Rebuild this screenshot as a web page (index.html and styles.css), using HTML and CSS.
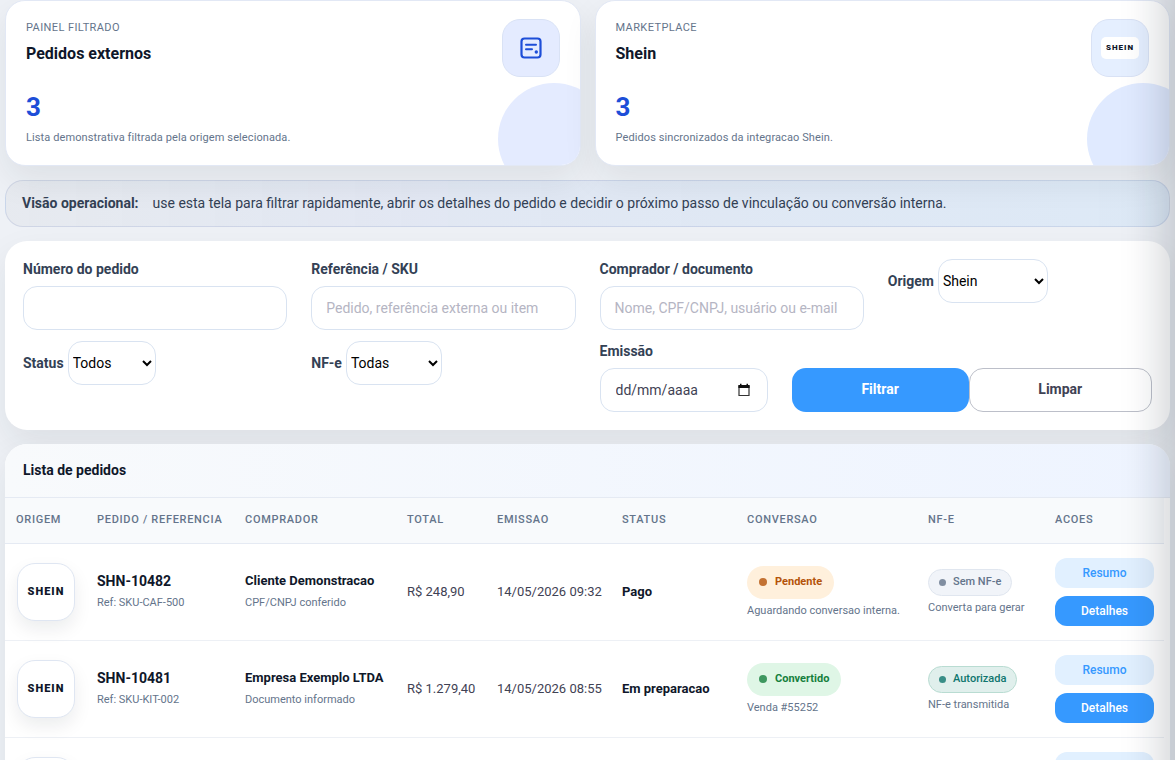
FILE: index.html
```html
<!DOCTYPE html>
<html lang="pt-BR">
<head>
    <meta charset="UTF-8">
    <meta name="viewport" content="width=device-width, initial-scale=1.0">
    <title>Pedidos externos</title>
    <link rel="stylesheet" href="styles.css">
</head>
<body>
    <main class="page">
        <section class="summary">
            <article class="summary-card">
                <div class="summary-top">
                    <div>
                        <p class="summary-kicker">Painel filtrado</p>
                        <h2 class="summary-title">Pedidos externos</h2>
                    </div>
                    <div class="summary-icon">
                        <svg width="24" height="24" viewBox="0 0 24 24" fill="none" stroke="#1d4ed8" stroke-linecap="round" stroke-linejoin="round">
                            <rect x="2.500" y="2.500" width="19" height="19" rx="3" stroke-width="2.2"/>
                            <path d="M7 8.700h10M7 13.300h6" stroke-width="2"/>
                            <circle cx="17.300" cy="16" r="1.700" fill="#1d4ed8" stroke="none"/>
                        </svg>
                    </div>
                </div>
                <p class="summary-value">3</p>
                <p class="summary-note">Lista demonstrativa filtrada pela origem selecionada.</p>
            </article>
            <article class="summary-card market">
                <div class="summary-top">
                    <div>
                        <p class="summary-kicker">Marketplace</p>
                        <h2 class="summary-title">Shein</h2>
                    </div>
                    <div class="summary-icon"><span class="brand-chip">SHEIN</span></div>
                </div>
                <p class="summary-value">3</p>
                <p class="summary-note">Pedidos sincronizados da integracao Shein.</p>
            </article>
        </section>

        <section class="hint">
            <strong>Visão operacional:</strong>
            <span>use esta tela para filtrar rapidamente, abrir os detalhes do pedido e decidir o próximo passo de vinculação ou conversão interna.</span>
        </section>

        <form class="filters">
            <div class="field">
                <label for="numero">Número do pedido</label>
                <input type="text" id="numero">
            </div>
            <div class="field">
                <label for="referencia">Referência / SKU</label>
                <input type="text" id="referencia" placeholder="Pedido, referência externa ou item">
            </div>
            <div class="field">
                <label for="comprador">Comprador / documento</label>
                <input type="text" id="comprador" placeholder="Nome, CPF/CNPJ, usuário ou e-mail">
            </div>
            <div class="field-inline">
                <label for="origem">Origem</label>
                <select id="origem" class="select-lg">
                    <option>Shein</option>
                </select>
            </div>
            <div class="field-inline">
                <label for="status">Status</label>
                <select id="status" class="select-sm">
                    <option>Todos</option>
                </select>
            </div>
            <div class="field-inline">
                <label for="nfe">NF-e</label>
                <select id="nfe" class="select-md">
                    <option>Todas</option>
                </select>
            </div>
            <div class="field field-date">
                <label for="emissao">Emissão</label>
                <div class="date-box">
                    <input type="text" id="emissao" placeholder="dd/mm/aaaa">
                    <button type="button" class="date-btn" aria-label="Abrir calendário">
                        <svg width="14" height="14" viewBox="0 0 14 14">
                            <path d="M2 3h10v9.500H2z" fill="none" stroke="#333" stroke-width="1.200"/>
                            <path d="M1.400 2h11.200v3H1.400zM3 .8h1.500V2H3zM9.500 .8H11V2H9.500z" fill="#111"/>
                        </svg>
                    </button>
                </div>
            </div>
            <div class="filter-actions">
                <button type="submit" class="btn btn-primary">Filtrar</button>
                <button type="reset" class="btn btn-outline">Limpar</button>
            </div>
        </form>

        <section class="orders">
            <h3 class="orders-header">Lista de pedidos</h3>
            <table class="orders-table">
                <colgroup>
                    <col class="c-origem">
                    <col class="c-pedido">
                    <col class="c-comprador">
                    <col class="c-total">
                    <col class="c-data">
                    <col class="c-data">
                    <col class="c-conversao">
                    <col class="c-nfe">
                    <col class="c-acoes">
                </colgroup>
                <thead>
                    <tr>
                        <th>Origem</th>
                        <th>Pedido / Referencia</th>
                        <th>Comprador</th>
                        <th>Total</th>
                        <th>Emissao</th>
                        <th>Status</th>
                        <th>Conversao</th>
                        <th>NF-e</th>
                        <th>Acoes</th>
                    </tr>
                </thead>
                <tbody>
                    <tr>
                        <td><div class="brand-logo">SHEIN</div></td>
                        <td><strong class="order-id">SHN-10482</strong><span class="muted">Ref: SKU-CAF-500</span></td>
                        <td><strong class="buyer">Cliente Demonstracao</strong><span class="muted">CPF/CNPJ conferido</span></td>
                        <td>R$ 248,90</td>
                        <td>14/05/2026 09:32</td>
                        <td><strong>Pago</strong></td>
                        <td><span class="badge pending">Pendente</span><span class="note">Aguardando conversao interna.</span></td>
                        <td><span class="tag tag-gray">Sem NF-e</span><span class="note">Converta para gerar</span></td>
                        <td>
                            <div class="row-actions">
                                <button type="button" class="btn-row light">Resumo</button>
                                <button type="button" class="btn-row solid">Detalhes</button>
                            </div>
                        </td>
                    </tr>
                    <tr>
                        <td><div class="brand-logo">SHEIN</div></td>
                        <td><strong class="order-id">SHN-10481</strong><span class="muted">Ref: SKU-KIT-002</span></td>
                        <td><strong class="buyer">Empresa Exemplo LTDA</strong><span class="muted">Documento informado</span></td>
                        <td>R$ 1.279,40</td>
                        <td>14/05/2026 08:55</td>
                        <td><strong>Em preparacao</strong></td>
                        <td><span class="badge converted">Convertido</span><span class="note">Venda #55252</span></td>
                        <td><span class="tag tag-green">Autorizada</span><span class="note">NF-e transmitida</span></td>
                        <td>
                            <div class="row-actions">
                                <button type="button" class="btn-row light">Resumo</button>
                                <button type="button" class="btn-row solid">Detalhes</button>
                            </div>
                        </td>
                    </tr>
                    <tr>
                        <td><div class="brand-logo"></div></td>
                        <td></td>
                        <td></td>
                        <td></td>
                        <td></td>
                        <td></td>
                        <td><span class="badge pending">Pendente</span><span class="note">Aguardando conversao interna.</span></td>
                        <td></td>
                        <td>
                            <div class="row-actions">
                                <button type="button" class="btn-row light">Resumo</button>
                                <button type="button" class="btn-row solid">Detalhes</button>
                            </div>
                        </td>
                    </tr>
                </tbody>
            </table>
        </section>
    </main>
    <aside class="drawer" aria-hidden="true"></aside>
</body>
</html>
```
FILE: styles.css
```css
* {
    margin: 0;
    padding: 0;
    box-sizing: border-box;
}

html {
    height: 100%;
    overflow: hidden;
}

body {
    height: 100%;
    overflow: hidden;
    background: #eef1f6;
    color: #3f4254;
    font-family: Roboto, sans-serif;
    font-size: 14px;
    line-height: 21px;
}

input,
select,
button {
    font-family: inherit;
    font-size: 14px;
}

.page {
    padding: 0 5px;
}

/* summary cards */
.summary {
    display: grid;
    grid-template-columns: 1fr 1fr;
    gap: 14px;
    margin-bottom: 14px;
}

.summary-card {
    position: relative;
    overflow: hidden;
    height: 166px;
    padding: 18px 20px;
    background: #fff;
    border: 1px solid #e2e8f5;
    border-radius: 20px;
    box-shadow: 0 14px 34px rgba(20, 40, 40, 0.08);
}

.summary-card::after {
    content: "";
    position: absolute;
    right: -30px;
    bottom: -30px;
    width: 112px;
    height: 112px;
    border-radius: 50%;
    background: #e4ebff;
}

.summary-card.market::after {
    background: #e0eaff;
}

.summary-top {
    display: flex;
    justify-content: space-between;
    height: 73px;
}

.summary-kicker {
    color: #64748b;
    font-size: 11px;
    line-height: 18px;
    letter-spacing: 0.4px;
    text-transform: uppercase;
}

.summary-title {
    margin-top: 7px;
    color: #0f172a;
    font-size: 16px;
    font-weight: 700;
    line-height: 20px;
}

.summary-icon {
    display: flex;
    align-items: center;
    justify-content: center;
    width: 58px;
    height: 58px;
    background: #e4ebff;
    border: 1px solid #d9e2f5;
    border-radius: 18px;
}

.market .summary-icon {
    background: #e5efff;
}

.brand-chip {
    width: 38px;
    background: #fff;
    border-radius: 5px;
    color: #0f172a;
    font-size: 8px;
    font-weight: 900;
    letter-spacing: 1px;
    line-height: 22px;
    text-align: center;
}

.summary-value {
    color: #1d4ed8;
    font-size: 26px;
    font-weight: 700;
    line-height: 31px;
}

.summary-note {
    margin-top: 6px;
    color: #64748b;
    font-size: 11px;
    line-height: 18px;
    letter-spacing: 0.1px;
}

.hint {
    display: flex;
    gap: 14px;
    margin-bottom: 14px;
    padding: 12px 16px;
    background: linear-gradient(90deg, rgba(15, 23, 42, 0.03), rgba(59, 110, 216, 0.07) 40%, rgba(54, 153, 255, 0.09));
    border: 1px solid rgba(148, 163, 200, 0.28);
    border-radius: 18px;
    color: #334155;
}

/* filters */
.filters {
    display: grid;
    grid-template-columns: repeat(12, 1fr);
    gap: 11px 24px;
    margin-bottom: 14px;
    padding: 18px;
    background: #fff;
    border-radius: 22px;
    box-shadow: 0 14px 34px rgba(20, 40, 40, 0.08);
}

.filters label {
    color: #334155;
    font-weight: 700;
}

.field,
.field-inline {
    grid-column: span 3;
    min-width: 0;
}

.field label {
    display: block;
    margin-bottom: 6px;
}

.field-inline {
    display: flex;
    align-items: center;
    align-self: start;
    gap: 4px;
}

.field > input,
.field-inline select,
.date-box {
    width: 100%;
    height: 44px;
    background: #fff;
    border: 1px solid #d9e3f1;
    border-radius: 14px;
    outline: none;
}

.field > input {
    padding: 0 14px;
}

.filters input::placeholder {
    color: #b5b5c3;
}

.field-inline select {
    color: #000;
}

.field-inline .select-sm {
    width: 88px;
}

.field-inline .select-md {
    width: 96px;
}

.field-inline .select-lg {
    width: 110px;
}

.field-date {
    grid-column: span 2;
}

.date-box {
    display: flex;
    align-items: center;
    padding: 0 16px 0 15px;
}

.date-box input {
    flex: 1;
    min-width: 0;
    border: 0;
    outline: none;
}

.filters .date-box input::placeholder {
    color: #3f4254;
}

.date-btn {
    display: flex;
    background: none;
    border: 0;
    cursor: pointer;
}

.filter-actions {
    grid-column: span 4;
    display: flex;
    align-items: flex-end;
}

.btn {
    flex: 1 1 auto;
    height: 44px;
    padding-bottom: 2px;
    border: 1px solid transparent;
    border-radius: 14px;
    font-weight: 700;
    cursor: pointer;
}

.btn-primary {
    background: #3699ff;
    color: #fff;
}

.btn-outline {
    background: #fff;
    border-color: #bcbfc9;
    color: #3f4254;
}

/* orders list */
.orders {
    overflow: hidden;
    background: #fff;
    border-radius: 22px;
    box-shadow: 0 14px 34px rgba(20, 40, 40, 0.08);
}

.orders-header {
    padding: 16px 18px;
    background: linear-gradient(90deg, #f8fafc, #eef4ff);
    border-bottom: 1px solid #e5eaf3;
    color: #0f172a;
    font-size: 14px;
    font-weight: 700;
}

.orders-table {
    width: calc(100% - 6px);
    border-collapse: separate;
    border-spacing: 0;
    table-layout: fixed;
}

.c-origem {
    width: 81px;
}

.c-pedido {
    width: 148px;
}

.c-comprador {
    width: 162px;
}

.c-total {
    width: 90px;
}

.c-data {
    width: 125px;
}

.c-conversao {
    width: 181px;
}

.c-nfe {
    width: 127px;
}

.c-acoes {
    width: 120px;
}

.orders-table th {
    padding: 11px 11px 13px;
    background: #f8fafc;
    border-bottom: 1px solid #e5eaf3;
    color: #64748b;
    font-size: 11px;
    font-weight: 500;
    letter-spacing: 0.7px;
    text-align: left;
    text-transform: uppercase;
    white-space: nowrap;
}

.orders-table td {
    padding: 14px 10px 14px 11px;
    border-bottom: 1px solid #edf0f5;
    font-size: 13px;
    line-height: 20px;
    white-space: nowrap;
}

.orders-table td strong {
    color: #0f172a;
    font-weight: 700;
}

.orders-table td .order-id {
    display: block;
    font-size: 14px;
}

.orders-table td .buyer {
    display: block;
}

.brand-logo {
    width: 58px;
    height: 58px;
    margin-left: 1px;
    background: #fff;
    border: 1px solid #dfe6f2;
    border-radius: 18px;
    box-shadow: 0 8px 18px rgba(15, 23, 42, 0.08);
    color: #0f172a;
    font-size: 11px;
    font-weight: 900;
    letter-spacing: 1px;
    line-height: 56px;
    text-align: center;
}

.muted,
.note {
    display: block;
    color: #64748b;
    font-size: 11px;
}

.muted {
    margin-top: 2px;
    line-height: 20px;
}

.note {
    margin-top: 4px;
    line-height: 16px;
}

.badge,
.tag {
    display: inline-flex;
    align-items: center;
    vertical-align: top;
    border-radius: 999px;
    font-size: 11px;
    font-weight: 700;
}

.badge {
    gap: 8px;
    height: 33px;
    padding: 0 12px;
}

.tag {
    gap: 7px;
    height: 27px;
    padding: 0 10px;
    border: 1px solid;
    font-weight: 500;
}

.badge::before,
.tag::before {
    content: "";
    width: 8px;
    height: 8px;
    border-radius: 50%;
    background: currentColor;
    opacity: 0.8;
}

.tag::before {
    width: 7px;
    height: 7px;
}

.pending {
    background: #fff0dc;
    color: #b45309;
}

.converted {
    background: #dff6e6;
    color: #15803d;
}

.tag-gray {
    background: #f1f4f9;
    border-color: #e0e6ef;
    color: #64748b;
}

.tag-green {
    background: #e0efec;
    border-color: #b9dcd2;
    color: #0f766e;
}

.row-actions {
    display: grid;
    gap: 8px;
}

.btn-row {
    height: 30px;
    border: 0;
    border-radius: 12px;
    font-size: 12px;
    font-weight: 500;
    cursor: pointer;
}

.light {
    background: #e1f0ff;
    color: #3699ff;
}

.solid {
    background: #3699ff;
    color: #fff;
}

/* closed side drawer, only its shadow reaches the page */
.drawer {
    position: fixed;
    top: -60px;
    bottom: -60px;
    left: 100%;
    width: 320px;
    background: #fff;
    box-shadow: -12px 0 40px rgba(15, 23, 42, 0.2);
}
```
